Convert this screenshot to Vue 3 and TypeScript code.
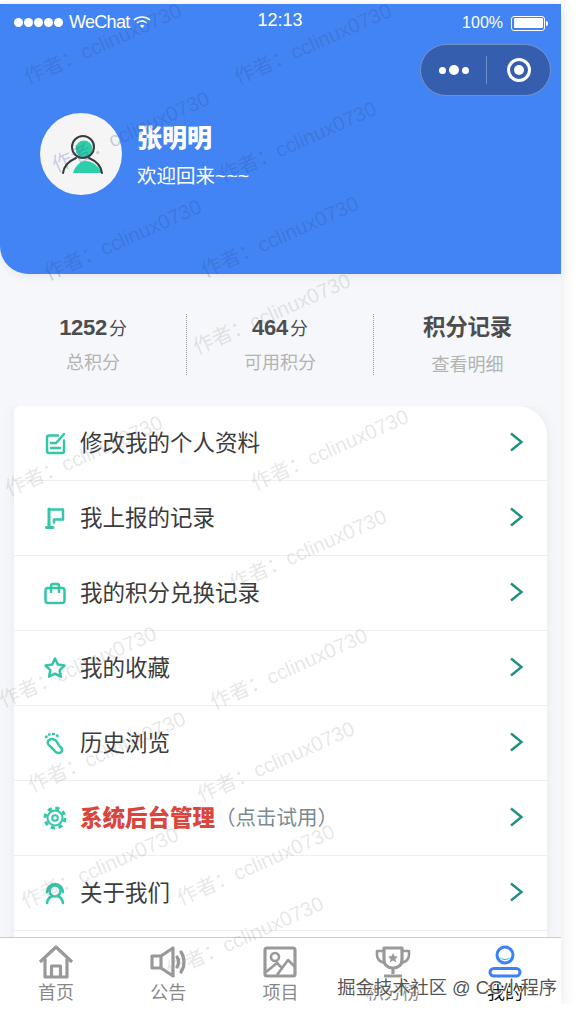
<script setup lang="ts">
const stats = [
  { value: '1252', unit: '分', label: '总积分' },
  { value: '464', unit: '分', label: '可用积分' },
]

const menu = [
  { id: 'edit', text: '修改我的个人资料' },
  { id: 'flag', text: '我上报的记录' },
  { id: 'bag', text: '我的积分兑换记录' },
  { id: 'star', text: '我的收藏' },
  { id: 'foot', text: '历史浏览' },
  { id: 'gear', text: '系统后台管理', hint: '（点击试用）' },
  { id: 'about', text: '关于我们' },
  { id: 'none', text: '' },
]

const tabs = [
  { id: 'home', label: '首页' },
  { id: 'horn', label: '公告' },
  { id: 'image', label: '项目' },
  { id: 'trophy', label: '积分榜' },
  { id: 'user', label: '我的', active: true },
]

// watermark centres, measured on the page
const marks = [
  [102, 42], [312, 42], [130, 130], [297, 140], [122, 238], [279, 235],
  [271, 312], [83, 454], [329, 448], [307, 548], [77, 665], [288, 667],
  [106, 750], [275, 760], [99, 866], [255, 863], [244, 935],
]
</script>

<template>
  <div class="page">
    <header class="header">
      <div class="status">
        <div class="status-left">
          <span class="dots"><i v-for="n in 5" :key="n"></i></span>
          <span class="carrier">WeChat</span>
          <svg width="18" height="14" viewBox="0 0 18 14" fill="none" stroke="#fff" stroke-width="1.6">
            <path d="M1 5c4.500-4 11.500-4 16 0" />
            <path d="M4 8c3-2.600 7-2.600 10 0" />
            <path d="M9 13l-2.500-2.500c1.500-1 3.500-1 5 0z" fill="#fff" stroke="none" />
          </svg>
        </div>
        <div class="status-time">12:13</div>
        <div class="status-right">
          <span class="percent">100%</span>
          <span class="battery"><i></i></span>
          <span class="battery-tip"></span>
        </div>
      </div>

      <div class="capsule-row">
        <div class="capsule">
          <div class="capsule-more"><i></i><i class="big"></i><i></i></div>
          <span class="capsule-line"></span>
          <div class="capsule-close"><i></i></div>
        </div>
      </div>

      <div class="profile">
        <div class="avatar">
          <svg width="48" height="48" viewBox="0 0 48 48" fill="none">
            <circle cx="27" cy="19" r="8.500" fill="#2ecfa8" />
            <path d="M16 43c2-7 7-12 13-12s13 5 16 12z" fill="#2ecfa8" />
            <circle cx="26" cy="17" r="11" stroke="#3b3b3b" stroke-width="2" />
            <path d="M6 43c1-7 6-12 13-15M45 43c-1-7-6-12-13-15" stroke="#3b3b3b" stroke-width="2" stroke-linecap="round" />
          </svg>
        </div>
        <div class="profile-text">
          <div class="name">张明明</div>
          <div class="welcome">欢迎回来~~~</div>
        </div>
      </div>
    </header>

    <section class="stats">
      <div v-for="item in stats" :key="item.label" class="stat">
        <div class="stat-top"><b>{{ item.value }}</b><span>{{ item.unit }}</span></div>
        <div class="stat-label">{{ item.label }}</div>
      </div>
      <div class="stat">
        <div class="stat-top record"><b>积分记录</b></div>
        <div class="stat-label record-label">查看明细</div>
      </div>
    </section>

    <main class="list-wrap">
      <div class="list">
        <div v-for="row in menu" :key="row.id" class="row">
          <template v-if="row.id !== 'none'">
            <svg class="row-icon" width="24" height="24" viewBox="0 0 24 24" fill="none" stroke="#33c6a8" stroke-width="2.500" stroke-linecap="round" stroke-linejoin="round">
              <template v-if="row.id === 'edit'">
                <path d="M15 4.500H6a2 2 0 0 0-2 2V20a2 2 0 0 0 2 2h13a2 2 0 0 0 2-2V9.500" />
                <path d="M8 12h5M8 17h9M14 11l7-8" />
              </template>
              <template v-else-if="row.id === 'flag'">
                <path d="M6 3v18M3.500 21.500H10" stroke-width="3" />
                <path d="M7 3.500h13v10H11v3" />
              </template>
              <template v-else-if="row.id === 'bag'">
                <rect x="2.500" y="7" width="19" height="15" rx="2.500" />
                <path d="M8 11V5a2 2 0 0 1 2-2h4a2 2 0 0 1 2 2v6" />
              </template>
              <path v-else-if="row.id === 'star'" d="M12 2.500l2.900 6.100 6.600.9-4.800 4.600 1.200 6.600L12 17.600l-5.900 3.100 1.200-6.600-4.800-4.600 6.600-.9z" />
              <template v-else-if="row.id === 'foot'">
                <path d="M5.500 9.500c2.500-2.500 7-1.500 8.500 1.500 1 2 1.500 3.500 4 5.500 2.500 2.500.5 6-3 5.500-3-.5-4-3-6-5-2.500-2-6-4-3.500-7.500z" />
                <path d="M3 6l.5-.5M6 3.500h.5M10 3h1M14 4.500l.5.500" />
              </template>
              <template v-else-if="row.id === 'gear'">
                <circle cx="12" cy="12" r="10" stroke-width="3" stroke-dasharray="4.200 3.650" stroke-linecap="butt" />
                <circle cx="12" cy="12" r="7.500" stroke-width="2" />
                <circle cx="12" cy="12" r="2.800" stroke-width="2" />
              </template>
              <template v-else-if="row.id === 'about'">
                <circle cx="12" cy="10" r="5.500" />
                <path d="M4 11a8 8 0 0 1 16 0M4 22c.5-4 3-6 5.500-7M20 22c-.5-4-3-6-5.500-7" />
              </template>
            </svg>
            <span class="row-text" :class="{ danger: row.id === 'gear' }">{{ row.text }}</span>
            <span v-if="row.hint" class="row-hint">{{ row.hint }}</span>
            <svg class="chevron" width="15" height="20" viewBox="0 0 15 20" fill="none" stroke="#1f8f7e" stroke-width="2.400">
              <path d="M2 1.500L12.500 10 2 18.500" />
            </svg>
          </template>
        </div>
      </div>
    </main>

    <nav class="tabbar">
      <div v-for="tab in tabs" :key="tab.id" class="tab" :class="{ active: tab.active }">
        <svg width="36" height="34" viewBox="0 0 36 34" fill="none" stroke="#999" stroke-width="3.200" stroke-linejoin="round">
          <template v-if="tab.id === 'home'">
            <path d="M2 17L18 2l16 15" />
            <path d="M7 14v18h22V14" />
            <path d="M13.500 32V21h9v11" />
          </template>
          <template v-else-if="tab.id === 'horn'">
            <path d="M2 11h9L23 3v28l-12-8H2z" />
            <path d="M11 11v12" />
            <path d="M27 12c2 3 2 7 0 10M31 7c4 6 4 14 0 20" stroke-linecap="round" />
          </template>
          <template v-else-if="tab.id === 'image'">
            <rect x="3" y="3" width="30" height="28" rx="2" />
            <circle cx="13" cy="12" r="4" stroke-width="2.600" />
            <path d="M4 27l11-9 5 5M15 30l11-15 7 7" stroke-width="2.600" />
          </template>
          <template v-else-if="tab.id === 'trophy'">
            <path d="M9 3h18v12c0 5-4 8-9 8s-9-3-9-8z" />
            <path d="M9 6H2v4c0 4 3 7 8 8M27 6h7v4c0 4-3 7-8 8" stroke-width="2.600" />
            <path d="M18 23v6M9 31h18" />
            <path d="M18 8l1.500 3.200 3.500.4-2.600 2.300.7 3.500-3.100-1.800-3.100 1.800.7-3.500-2.600-2.300 3.500-.4z" fill="#999" stroke="none" />
          </template>
          <template v-else>
            <path d="M12 11c2 4 10 4 12 0a6.500 6.500 0 0 1-12 0z" fill="#33c6a8" stroke="none" />
            <circle cx="18" cy="10" r="8" stroke="#3b82f6" stroke-width="3" />
            <rect x="3" y="23.500" width="30" height="7.500" rx="3.750" stroke="#3b82f6" stroke-width="3" />
          </template>
        </svg>
        <span class="tab-label">{{ tab.label }}</span>
      </div>
    </nav>

    <div class="marks">
      <span v-for="(m, i) in marks" :key="i" class="mark" :class="{ 'on-blue': m[1] < 260 }" :style="{ left: m[0] + 'px', top: m[1] - 4 + 'px' }">作者：cclinux0730</span>
    </div>
    <div class="credit">掘金技术社区 @ CC小程序</div>
  </div>
</template>

<style>
html,
body {
  margin: 0;
  background: #fff;
}
</style>

<style scoped>
.page {
  position: relative;
  width: 561px;
  height: 1000px;
  margin-top: 4px;
  display: flex;
  flex-direction: column;
  background: #f5f7fa;
  box-shadow: 0 4px 16px rgba(0, 0, 0, 0.1);
  font-family: "Liberation Sans", "Noto Sans CJK SC", sans-serif;
}

.header {
  height: 270px;
  flex-shrink: 0;
  box-sizing: border-box;
  background: #4284f4;
  border-radius: 0 0 0 28px;
  box-shadow: 0 3px 10px rgba(0, 0, 0, 0.06);
  color: #fff;
}

.status {
  height: 36px;
  display: grid;
  grid-template-columns: 1fr auto 1fr;
  align-items: center;
  padding: 0 13px 0 14px;
}

.status-left {
  display: flex;
  align-items: center;
  gap: 3px;
}

.dots {
  display: flex;
  gap: 1px;
  margin-right: 3px;
}

.dots i {
  width: 9px;
  height: 9px;
  border-radius: 50%;
  background: #fff;
}

.carrier {
  font-size: 18px;
  letter-spacing: -0.7px;
}

.status-time {
  font-size: 18px;
  margin: -3px 2px 0 0;
}

.status-right {
  display: flex;
  align-items: center;
  justify-content: flex-end;
  padding-top: 2px;
}

.percent {
  font-size: 16px;
  margin-right: 8px;
}

.battery {
  width: 34px;
  height: 15px;
  box-sizing: border-box;
  border: 1.5px solid #fff;
  border-radius: 3px;
  padding: 1.5px;
  display: flex;
}

.battery i {
  flex: 1;
  background: #fff;
  border-radius: 1px;
}

.battery-tip {
  width: 2px;
  height: 5px;
  margin-left: 1px;
  background: #fff;
  border-radius: 0 2px 2px 0;
}

.capsule-row {
  display: flex;
  justify-content: flex-end;
  padding: 4px 10px 0 0;
}

.capsule {
  width: 131px;
  height: 52px;
  box-sizing: border-box;
  border: 1px solid rgba(255, 255, 255, 0.3);
  border-radius: 26px;
  background: #355fae;
  display: flex;
  align-items: center;
}

.capsule-more {
  width: 65px;
  display: flex;
  align-items: center;
  justify-content: center;
  gap: 3px;
}

.capsule-more i {
  width: 7px;
  height: 7px;
  border-radius: 50%;
  background: #fff;
}

.capsule-more i.big {
  width: 10px;
  height: 10px;
}

.capsule-line {
  width: 1px;
  height: 28px;
  background: rgba(255, 255, 255, 0.3);
}

.capsule-close {
  flex: 1;
  display: flex;
  justify-content: center;
}

.capsule-close i {
  width: 24px;
  height: 24px;
  box-sizing: border-box;
  border: 3px solid #fff;
  border-radius: 50%;
  display: flex;
  align-items: center;
  justify-content: center;
}

.capsule-close i::after {
  content: "";
  width: 10px;
  height: 10px;
  border-radius: 50%;
  background: #fff;
}

.profile {
  display: flex;
  align-items: center;
  gap: 15px;
  padding: 17px 0 0 40px;
}

.avatar {
  width: 82px;
  height: 82px;
  border-radius: 50%;
  background: #f5f5f5;
  display: flex;
  align-items: center;
  justify-content: center;
}

.profile-text {
  display: flex;
  flex-direction: column;
  gap: 7px;
  padding-top: 3px;
}

.name {
  font-size: 25px;
  line-height: 34px;
  font-weight: 900;
}

.welcome {
  font-size: 19.500px;
  line-height: 28px;
}

.stats {
  height: 132px;
  flex-shrink: 0;
  box-sizing: border-box;
  padding-top: 40px;
  display: grid;
  grid-template-columns: repeat(3, 1fr);
  align-items: start;
}

.stat {
  height: 61px;
  box-sizing: border-box;
  display: flex;
  flex-direction: column;
  align-items: center;
  border-right: 1px dotted #999;
}

.stat:last-child {
  border-right: 0;
}

.stat-top {
  height: 26px;
  display: flex;
  align-items: baseline;
  gap: 2px;
  color: #4d4d4d;
}

.stat-top b {
  font-size: 22px;
  line-height: 26px;
  letter-spacing: -0.3px;
}

.stat-top span {
  font-size: 18px;
}

.stat-top.record b {
  font-size: 22.500px;
  line-height: 28px;
}

.stat-label {
  margin-top: 11px;
  font-size: 18px;
  line-height: 24px;
  color: #b3b3b3;
}

.record-label {
  margin-top: 13px;
}

.list-wrap {
  flex: 1;
  min-height: 0;
  overflow: hidden;
  padding: 0 14px;
}

.list {
  background: #fff;
  border-radius: 6px 30px 0 0;
  box-shadow: 0 0 14px rgba(0, 0, 0, 0.06);
}

.row {
  height: 75px;
  box-sizing: border-box;
  display: flex;
  align-items: center;
  padding: 0 23px 0 29px;
  border-bottom: 1px solid #eeeeee;
}

.row-icon {
  flex-shrink: 0;
  margin-right: 13px;
}

.row-text {
  font-size: 22.500px;
  color: #3c3c3c;
  margin-bottom: 4px;
}

.row-text.danger {
  font-weight: 900;
  color: #d9463e;
}

.row-hint {
  font-size: 20.500px;
  color: #7b8b90;
  margin-bottom: 4px;
}

.chevron {
  margin-left: auto;
  margin-bottom: 2px;
}

.tabbar {
  height: 67px;
  flex-shrink: 0;
  box-sizing: border-box;
  border-top: 1px solid #cccccc;
  background: #fff;
  display: grid;
  grid-template-columns: repeat(5, 1fr);
  position: relative;
}

.tab {
  display: flex;
  flex-direction: column;
  align-items: center;
  padding-top: 7px;
}

.tab-label {
  font-size: 18px;
  line-height: 24px;
  margin-top: 2px;
  color: #888;
}

.tab.active .tab-label {
  color: #111;
}

.marks {
  position: absolute;
  inset: 0;
  overflow: hidden;
  pointer-events: none;
}

.mark {
  position: absolute;
  transform: translate(-50%, -50%) rotate(-24deg);
  white-space: nowrap;
  font-size: 20.500px;
  color: rgba(130, 130, 130, 0.2);
}

.mark.on-blue {
  color: rgba(50, 80, 150, 0.25);
}

.credit {
  position: absolute;
  right: 4px;
  top: 972px;
  font-size: 18.300px;
  line-height: 24px;
  white-space: nowrap;
  color: #555;
  text-shadow: 0 0 2px #fff, 1px 1px 0 #fff;
}
</style>
